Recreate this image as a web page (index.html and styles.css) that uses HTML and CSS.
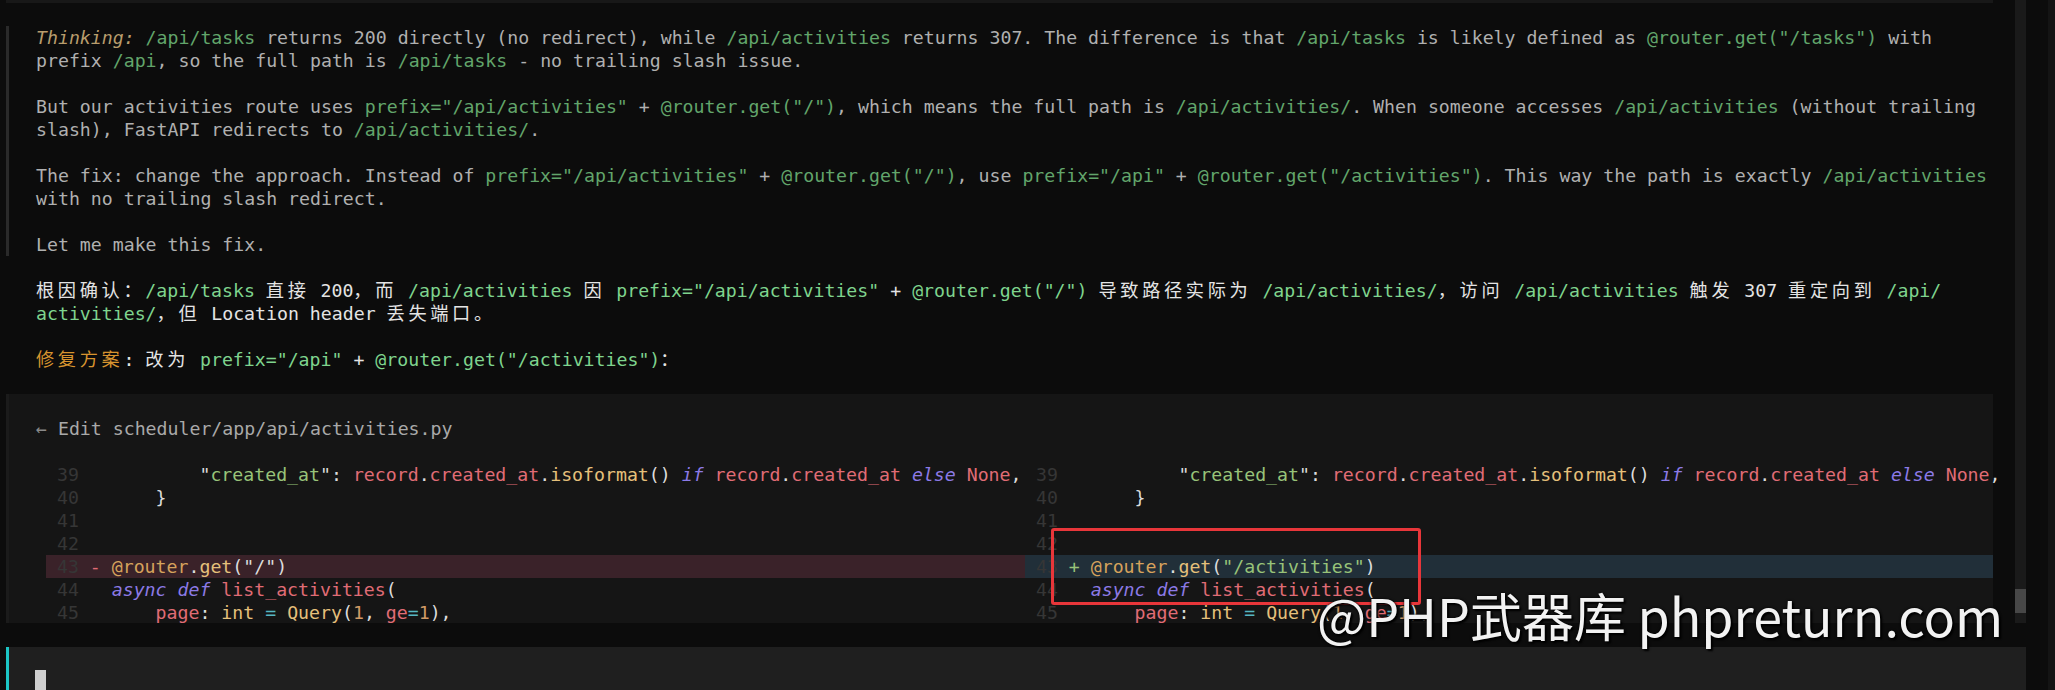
FILE: index.html
```html
<!DOCTYPE html>
<html lang="zh-CN">
<head>
    <meta charset="UTF-8">
    <meta name="viewport" content="width=device-width, initial-scale=1.0">
    <title>Terminal - activities route fix</title>
    <link rel="stylesheet" href="styles.css">
</head>
<body>
    <div class="app">
        <div class="workspace">
            <div class="upper">
                <div class="main">
                    <div class="top-strip"></div>

                    <div class="thinking">
                        <p><span class="label">Thinking:</span> <span class="path">/api/tasks</span> returns 200 directly (no redirect), while <span class="path">/api/activities</span> returns 307. The difference is that <span class="path">/api/tasks</span> is likely defined as <span class="path">@router.get("/tasks")</span> with prefix <span class="path">/api</span>, so the full path is <span class="path">/api/tasks</span> - no trailing slash issue.</p>
                        <p>But our activities route uses <span class="path">prefix="/api/activities"</span> + <span class="path">@router.get("/")</span>, which means the full path is <span class="path">/api/activities/</span>. When someone accesses <span class="path">/api/activities</span> (without trailing slash), FastAPI redirects to <span class="path">/api/activities/</span>.</p>
                        <p>The fix: change the approach. Instead of <span class="path">prefix="/api/activities"</span> + <span class="path">@router.get("/")</span>, use <span class="path">prefix="/api"</span> + <span class="path">@router.get("/activities")</span>. This way the path is exactly <span class="path">/api/activities</span> with no trailing slash redirect.</p>
                        <p>Let me make this fix.</p>
                    </div>

                    <div class="answer">
                        <p><span class="cjk">根因确认：</span><span class="path">/api/tasks</span> <span class="cjk">直接</span> 200<span class="cjk">，而</span> <span class="path">/api/activities</span> <span class="cjk">因</span> <span class="path">prefix="/api/activities"</span> + <span class="path">@router.get("/")</span> <span class="cjk">导致路径实际为</span> <span class="path">/api/activities/</span><span class="cjk">，访问</span> <span class="path">/api/activities</span> <span class="cjk">触发</span> 307 <span class="cjk">重定向到</span> <span class="path">/api/<wbr>activities/</span><span class="cjk">，但</span> Location header <span class="cjk">丢失端口。</span></p>
                        <p><span class="heading cjk">修复方案</span>: <span class="cjk">改为</span> <span class="path">prefix="/api"</span> + <span class="path">@router.get("/activities")</span><span class="cjk">：</span></p>
                    </div>

                    <div class="edit-box">
                        <div class="edit-title"><span class="arrow">←</span> Edit scheduler/app/api/activities.py</div>
                        <div class="diff">
                            <div class="pane">
                                <div class="row"><span class="ln">39</span><span class="mk"></span><span class="code">        <span class="q">"</span><span class="s">created_at</span><span class="q">"</span>: <span class="v">record</span>.<span class="v">created_at</span>.<span class="f">isoformat</span>() <span class="k">if</span> <span class="v">record</span>.<span class="v">created_at</span> <span class="k">else</span> <span class="v">None</span>,</span></div>
                                <div class="row"><span class="ln">40</span><span class="mk"></span><span class="code">    }</span></div>
                                <div class="row"><span class="ln">41</span><span class="mk"></span><span class="code"></span></div>
                                <div class="row"><span class="ln">42</span><span class="mk"></span><span class="code"></span></div>
                                <div class="row del"><span class="ln">43</span><span class="mk">-</span><span class="code"><span class="d">@router</span>.<span class="f">get</span>("/")</span></div>
                                <div class="row"><span class="ln">44</span><span class="mk"></span><span class="code"><span class="k">async def</span> <span class="v">list_activities</span>(</span></div>
                                <div class="row"><span class="ln">45</span><span class="mk"></span><span class="code">    <span class="v">page</span>: <span class="f">int</span> <span class="o">=</span> <span class="f">Query</span>(<span class="n">1</span>, <span class="v">ge</span><span class="o">=</span><span class="n">1</span>),</span></div>
                            </div>
                            <div class="pane">
                                <div class="row"><span class="ln">39</span><span class="mk"></span><span class="code">        <span class="q">"</span><span class="s">created_at</span><span class="q">"</span>: <span class="v">record</span>.<span class="v">created_at</span>.<span class="f">isoformat</span>() <span class="k">if</span> <span class="v">record</span>.<span class="v">created_at</span> <span class="k">else</span> <span class="v">None</span>,</span></div>
                                <div class="row"><span class="ln">40</span><span class="mk"></span><span class="code">    }</span></div>
                                <div class="row"><span class="ln">41</span><span class="mk"></span><span class="code"></span></div>
                                <div class="row"><span class="ln">42</span><span class="mk"></span><span class="code"></span></div>
                                <div class="row add"><span class="ln">43</span><span class="mk">+</span><span class="code"><span class="d">@router</span>.<span class="f">get</span>(<span class="s">"/activities"</span>)</span></div>
                                <div class="row"><span class="ln">44</span><span class="mk"></span><span class="code"><span class="k">async def</span> <span class="v">list_activities</span>(</span></div>
                                <div class="row"><span class="ln">45</span><span class="mk"></span><span class="code">    <span class="v">page</span>: <span class="f">int</span> <span class="o">=</span> <span class="f">Query</span>(<span class="n">1</span>, <span class="v">ge</span><span class="o">=</span><span class="n">1</span>),</span></div>
                            </div>
                        </div>
                    </div>
                </div>

                <div class="rail"><div class="thumb"></div></div>
            </div>

            <div class="input-bar"><span class="cursor"></span></div>

            <div class="highlight-box"></div>
            <div class="watermark">@PHP武器库 phpreturn.com</div>
        </div>
        <div class="side"></div>
    </div>
</body>
</html>
```

FILE: styles.css
```css
body {
    margin: 0;
    background-color: #0c0c0c;
    font-family: "DejaVu Sans Mono", "Noto Sans CJK SC", monospace;
    font-size: 18.22px;
    line-height: 23px;
    color: #b0b0b0;
    overflow: hidden;
}

p {
    margin: 0 0 23px;
    width: 178.5ch;
}

.app {
    display: flex;
    height: 690px;
}

.workspace {
    position: relative;
    width: 2026px;
    display: flex;
    flex-direction: column;
}

.upper {
    display: flex;
    height: 623px;
}

.main {
    width: 1987px;
    padding-left: 6px;
}

.top-strip {
    height: 3px;
    background-color: #181818;
    margin-bottom: 23px;
}

/* thinking block */
.thinking {
    border-left: 3px solid #2a2a2a;
    padding-left: 27px;
    margin-bottom: 23px;
}

.thinking p:last-child {
    margin-bottom: 0;
}

.label {
    font-style: italic;
    color: #b99d6c;
}

.path {
    color: #62a56b;
}

/* answer text */
.answer {
    padding-left: 30px;
    color: #e4e4e4;
}

.answer .path {
    color: #7fd48e;
}

.cjk {
    letter-spacing: 0.2em;
}

.heading {
    color: #d8942f;
}

/* edit preview */
.edit-box {
    box-sizing: border-box;
    height: 229px;
    background-color: #151515;
    border-left: 3px solid #1b1b1b;
    padding: 23px 0 0 27px;
    overflow-x: visible;
    overflow-y: clip;
}

.edit-title {
    color: #a9a9a9;
    margin-bottom: 23px;
}

.arrow {
    color: #8a8a8a;
}

.diff {
    display: grid;
    grid-template-columns: 979px 968px;
    margin-left: 10px;
}

.row {
    display: grid;
    grid-template-columns: 3ch 2ch 1fr;
    padding-left: 1ch;
    height: 23px;
    white-space: pre;
    color: #dcdcdc;
}

.row.del {
    background-color: #3a2229;
}

.row.add {
    background-color: #212f39;
}

.ln {
    color: #363636;
}

.del .mk {
    color: #e06c75;
}

.add .mk {
    color: #98c379;
}

.q { color: #dcdcdc; }
.s { color: #98c379; }
.v { color: #e06c75; }
.f { color: #e5c07b; }
.k { color: #8c7ae6; font-style: italic; }
.n { color: #d19a66; }
.o { color: #56b6c2; }
.d { color: #d6a25c; }

/* scrollbar */
.rail {
    box-sizing: border-box;
    width: 11px;
    margin-left: 22px;
    background-color: #1a1a1a;
    display: flex;
    flex-direction: column;
    justify-content: flex-end;
    padding-bottom: 10px;
}

.thumb {
    height: 24px;
    background-color: #474747;
}

/* prompt */
.input-bar {
    flex: 1;
    margin: 24px 0 0 6px;
    border-left: 3px solid #1cc6c6;
    background-color: #1f1f1f;
    padding: 23px 0 0 26px;
}

.cursor {
    display: block;
    width: 11px;
    height: 23px;
    background-color: #cfcfcf;
}

.side {
    flex: 1;
    border-right: 7px solid #141414;
}

/* annotation overlays */
.highlight-box {
    position: absolute;
    left: 1051px;
    top: 528px;
    width: 370px;
    height: 77px;
    box-sizing: border-box;
    border: 3px solid #e8363a;
    border-radius: 3px;
}

.watermark {
    position: absolute;
    left: 1317px;
    top: 589px;
    font-family: "Noto Sans CJK SC", "Noto Sans", sans-serif;
    font-size: 52px;
    line-height: 1;
    color: #f2f2f2;
    text-shadow: 2px 2px 2px #000, 0 0 3px #000;
    white-space: nowrap;
}
```
